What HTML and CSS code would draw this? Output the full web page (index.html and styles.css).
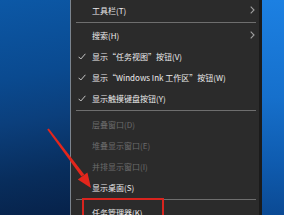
FILE: index.html
```html
<!DOCTYPE html>
<html lang="zh-CN">
<head>
<meta charset="utf-8">
<link rel="stylesheet" href="styles.css">
</head>
<body>
<div class="screen">
  <div class="desk-left"></div>
  <div class="menu">
    <div class="item">工具栏(T)<span class="chev"><svg width="5" height="8" viewBox="0 0 5 8"><path d="M0.7 0.7 L4 4 L0.7 7.3" fill="none" stroke="#a0a0a0" stroke-width="1.1"/></svg></span></div>
    <div class="sep"></div>
    <div class="item">搜索(H)<span class="chev"><svg width="5" height="8" viewBox="0 0 5 8"><path d="M0.7 0.7 L4 4 L0.7 7.3" fill="none" stroke="#a0a0a0" stroke-width="1.1"/></svg></span></div>
    <div class="item"><span class="check"><svg width="8" height="7" viewBox="0 0 8 7"><path d="M0.6 3.8 L2.8 6 L7.4 0.8" fill="none" stroke="#c8c8c8" stroke-width="1"/></svg></span>显示“任务视图”按钮(V)</div>
    <div class="item"><span class="check"><svg width="8" height="7" viewBox="0 0 8 7"><path d="M0.6 3.8 L2.8 6 L7.4 0.8" fill="none" stroke="#c8c8c8" stroke-width="1"/></svg></span>显示“Windows Ink 工作区”按钮(W)</div>
    <div class="item"><span class="check"><svg width="8" height="7" viewBox="0 0 8 7"><path d="M0.6 3.8 L2.8 6 L7.4 0.8" fill="none" stroke="#c8c8c8" stroke-width="1"/></svg></span>显示触摸键盘按钮(Y)</div>
    <div class="sep sep-mid"></div>
    <div class="item disabled">层叠窗口(D)</div>
    <div class="item disabled">堆叠显示窗口(E)</div>
    <div class="item disabled">并排显示窗口(I)</div>
    <div class="item">显示桌面(S)</div>
    <div class="sep sep-low"></div>
    <div class="item">任务管理器(K)</div>
  </div>
  <div class="desk-right"></div>
  <div class="highlight"></div>
  <svg class="arrow" width="284" height="215" viewBox="0 0 284 215">
    <path d="M47.2 129.4 L48.8 128.6 L84.2 174.4 L81.4 176.6 Z" fill="#e3261c"/>
    <path d="M91 188 L77.8 179.4 L87.4 172.4 Z" fill="#e3261c"/>
  </svg>
</div>
</body>
</html>
```
FILE: styles.css
```css
html, body {
  margin: 0;
  padding: 0;
  background: #2b2b2b;
}
.screen {
  position: relative;
  width: 284px;
  height: 215px;
  overflow: hidden;
  display: flex;
  font-family: "Noto Sans CJK SC", "Noto Sans", sans-serif;
  font-size: 8px;
}
.desk-left {
  width: 70px;
  flex: none;
  background: linear-gradient(170deg, #0c58a6 0%, #0a4a90 35%, #0b3f7c 55%, #082d5c 80%, #07224a 100%);
  border-right: 1px solid #7b848e;
}
.menu {
  flex: 1;
  background: #2b2b2b;
  display: flex;
  flex-direction: column;
  border-right: 3px solid #1b1b1b;
}
.item {
  position: relative;
  height: 21px;
  line-height: 21px;
  padding-left: 21px;
  color: #ececec;
  white-space: nowrap;
  flex: none;
}
.item.disabled {
  color: #6c6c6c;
}
.check {
  position: absolute;
  left: 7px;
  top: 7px;
  width: 8px;
  height: 7px;
  display: flex;
}
.chev {
  position: absolute;
  right: 4px;
  top: 6px;
  display: flex;
}
.sep {
  height: 1px;
  background: #6e6e6e;
  margin: 1px 3px 2px 5px;
  flex: none;
}
.sep-mid {
  margin-top: 1px;
  margin-bottom: 3px;
}
.sep-low {
  margin-top: 1px;
  margin-bottom: 2px;
}
.desk-right {
  width: 22px;
  flex: none;
  background: linear-gradient(180deg, #1c80e2 0%, #1670cc 45%, #0f5cb0 75%, #0b4a94 100%);
}
.highlight {
  position: absolute;
  left: 82px;
  top: 198px;
  width: 78px;
  height: 30px;
  border: 2px solid #d8241e;
}
.arrow {
  position: absolute;
  left: 0;
  top: 0;
}
```
